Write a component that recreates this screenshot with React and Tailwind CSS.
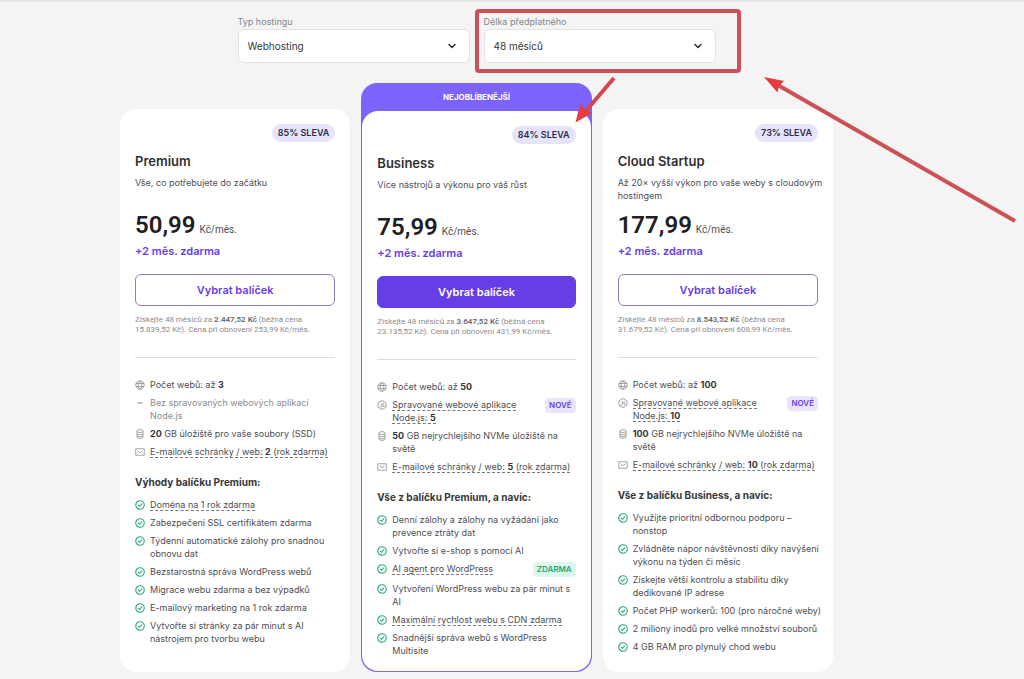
import React, { useState } from 'react';
import { ChevronDown, Minus } from 'lucide-react';

// each entry of `lines` is one row of text, *stars* mark the bold part
const plans = [
  {
    id: 'premium',
    name: 'Premium',
    discount: '85% SLEVA',
    description: 'Vše, co potřebujete do začátku',
    price: '50,99',
    total: '2.447,52 Kč',
    regular: '15.839,52 Kč',
    renewal: '253,99 Kč/měs.',
    specs: [
      { icon: 'globe', lines: ['Počet webů: až *3*'] },
      { icon: 'minus', lines: ['Bez spravovaných webových aplikací', 'Node.js'], muted: true },
      { icon: 'disk', lines: ['*20* GB úložiště pro vaše soubory (SSD)'] },
      { icon: 'mail', lines: ['E-mailové schránky / web: *2* (rok zdarma)'], hint: true },
    ],
    perksTitle: 'Výhody balíčku Premium:',
    perks: [
      { lines: ['Doména na 1 rok zdarma'], hint: true },
      { lines: ['Zabezpečení SSL certifikátem zdarma'] },
      { lines: ['Týdenní automatické zálohy pro snadnou', 'obnovu dat'] },
      { lines: ['Bezstarostná správa WordPress webů'] },
      { lines: ['Migrace webu zdarma a bez výpadků'] },
      { lines: ['E-mailový marketing na 1 rok zdarma'] },
      { lines: ['Vytvořte si stránky za pár minut s AI', 'nástrojem pro tvorbu webu'] },
    ],
  },
  {
    id: 'business',
    name: 'Business',
    popular: true,
    discount: '84% SLEVA',
    description: 'Více nástrojů a výkonu pro váš růst',
    price: '75,99',
    total: '3.647,52 Kč',
    regular: '23.135,52 Kč',
    renewal: '431,99 Kč/měs.',
    specs: [
      { icon: 'globe', lines: ['Počet webů: až *50*'] },
      { icon: 'node', lines: ['Spravované webové aplikace', 'Node.js: *5*'], hint: true, tag: 'NOVÉ' },
      { icon: 'disk', lines: ['*50* GB nejrychlejšího NVMe úložiště na', 'světě'] },
      { icon: 'mail', lines: ['E-mailové schránky / web: *5* (rok zdarma)'], hint: true },
    ],
    perksTitle: 'Vše z balíčku Premium, a navíc:',
    perks: [
      { lines: ['Denní zálohy a zálohy na vyžádání jako', 'prevence ztráty dat'] },
      { lines: ['Vytvořte si e-shop s pomocí AI'] },
      { lines: ['AI agent pro WordPress'], hint: true, tag: 'ZDARMA' },
      { lines: ['Vytvoření WordPress webu za pár minut s', 'AI'] },
      { lines: ['Maximální rychlost webu s CDN zdarma'], hint: true },
      { lines: ['Snadnější správa webů s WordPress', 'Multisite'] },
    ],
  },
  {
    id: 'cloud',
    name: 'Cloud Startup',
    discount: '73% SLEVA',
    description: 'Až 20× vyšší výkon pro vaše weby s cloudovým\nhostingem',
    price: '177,99',
    total: '8.543,52 Kč',
    regular: '31.679,52 Kč',
    renewal: '608,99 Kč/měs.',
    specs: [
      { icon: 'globe', lines: ['Počet webů: až *100*'] },
      { icon: 'node', lines: ['Spravované webové aplikace', 'Node.js: *10*'], hint: true, tag: 'NOVÉ' },
      { icon: 'disk', lines: ['*100* GB nejrychlejšího NVMe úložiště na', 'světě'] },
      { icon: 'mail', lines: ['E-mailové schránky / web: *10* (rok zdarma)'], hint: true },
    ],
    perksTitle: 'Vše z balíčku Business, a navíc:',
    perks: [
      { lines: ['Využijte prioritní odbornou podporu –', 'nonstop'] },
      { lines: ['Zvládněte nápor návštěvnosti díky navýšení', 'výkonu na týden či měsíc'] },
      { lines: ['Získejte větší kontrolu a stabilitu díky', 'dedikované IP adrese'] },
      { lines: ['Počet PHP workerů: 100 (pro náročné weby)'] },
      { lines: ['2 miliony inodů pro velké množství souborů'] },
      { lines: ['4 GB RAM pro plynulý chod webu'] },
    ],
  },
];

const iconPaths = {
  globe: 'M10 1.5a8.5 8.5 0 1 0 0 17 8.5 8.5 0 0 0 0-17ZM10 1.5c-5 5-5 12 0 17M10 1.5c5 5 5 12 0 17M2 7h16M2 13h16',
  node: 'M10 1 18 5.5v9L10 19 2 14.5v-9ZM8.5 6.5v6.3c0 1.2-.8 1.7-2.8 1.2M14.5 8c-1.2-1-3.5-.8-3.5.7 0 1.9 3.7 1 3.7 2.9 0 1.6-2.7 1.8-4 .6',
  disk: 'M4 4c0-3.5 12-3.5 12 0v12c0 3.5-12 3.5-12 0ZM4 5c0 2.5 12 2.5 12 0M4 9.5c0 2.5 12 2.5 12 0M4 13.5c0 2.5 12 2.5 12 0',
  mail: 'M1.5 3.5h17v13h-17ZM5 7.5l5 4 5-4',
};

function FeatureIcon({ name }) {
  if (name === 'minus') {
    return <Minus className="ml-px size-2" strokeWidth={3} />;
  }
  if (iconPaths[name]) {
    return (
      <svg className="size-[10px]" viewBox="0 0 20 20" fill="none" stroke="currentColor" strokeWidth="1.5" strokeLinejoin="round">
        <path d={iconPaths[name]} />
      </svg>
    );
  }
  return (
    <svg className="size-[10px] text-[#2aa876]" viewBox="0 0 20 20" fill="none" stroke="currentColor" strokeWidth="2.2" strokeLinecap="round">
      <circle cx="10" cy="10" r="8.5" />
      <path d="m6.5 10.500 2.500 2.200 4.500-5" />
    </svg>
  );
}

function Feature({ item }) {
  return (
    <li className={`flex items-start ${item.muted ? 'text-[#8b8b90]' : 'text-[#4d4e53]'}`}>
      <span className="flex h-[13px] w-[15px] shrink-0 items-center text-[#86878c]">
        <FeatureIcon name={item.icon} />
      </span>
      <span className="min-w-0 grow whitespace-nowrap">
        {item.lines.map((line) => (
          <span key={line} className="block">
            <span className={item.hint ? 'border-b border-dashed border-[#77787d]' : ''}>
              {line.split('*').map((part, i) =>
                i % 2 ? (
                  <strong key={i} className="font-bold text-[#36373b]">
                    {part}
                  </strong>
                ) : (
                  part
                )
              )}
            </span>
          </span>
        ))}
      </span>
      {item.tag && (
        <span
          className={`shrink-0 rounded px-1 text-[8px] leading-[15px] font-semibold ${
            item.tag === 'ZDARMA' ? 'bg-[#def7ec] text-[#1fa873]' : 'bg-[#ebe4ff] text-[#673de6]'
          }`}
        >
          {item.tag}
        </span>
      )}
    </li>
  );
}

function PlanBody({ plan }) {
  return (
    <div className="min-w-0 grow rounded-2xl bg-white px-[15px] pt-[15px] pb-[14px]">
      <div className="flex justify-end">
        <span className="rounded-full bg-[#e5e4fc] px-[6px] text-[9px] leading-[18px] font-semibold text-[#2f2b4a]">
          {plan.discount}
        </span>
      </div>
      <h2 className="mt-[9px] text-[13px] leading-5 font-semibold text-[#2f3033]">{plan.name}</h2>
      <p className="mt-[5px] h-7 text-[9px] leading-[13px] whitespace-pre text-[#4d4e53]">{plan.description}</p>
      <p className="mt-[7px] flex items-baseline gap-1 font-['Roboto',sans-serif] text-[#1f2024]">
        <span className="text-2xl leading-7 font-semibold">{plan.price}</span>
        <span className="text-[10px] leading-4 text-[#4d4e53]">Kč/měs.</span>
      </p>
      <p className="mt-1 text-[11px] leading-4 font-semibold text-[#673de6]">+2 měs. zdarma</p>
      <button
        type="button"
        className={`mt-[15px] h-8 w-full rounded-md border text-[11px] font-semibold ${
          plan.popular ? 'border-[#673de6] bg-[#673de6] text-white' : 'border-[#8d7cc4] bg-white text-[#673de6]'
        }`}
      >
        Vybrat balíček
      </button>
      <p className="mt-[9px] h-[22px] font-['Roboto',sans-serif] text-[8px] leading-[10px] whitespace-nowrap text-[#8b8b90]">
        Získejte 48 měsíců za <strong className="font-semibold text-[#66676c]">{plan.total}</strong> (běžná cena
        <br />
        {plan.regular}). Cena při obnovení {plan.renewal}
      </p>
      <hr className="mt-5 border-[#dadce0]" />
      <ul className="mt-5 flex flex-col gap-[5px] text-[9px] leading-[13px]">
        {plan.specs.map((item) => (
          <Feature key={item.icon} item={item} />
        ))}
      </ul>
      <h3 className="mt-4 text-[10px] leading-4 font-bold text-[#36373b]">{plan.perksTitle}</h3>
      <ul className="mt-2 flex flex-col gap-[5px] text-[9px] leading-[13px]">
        {plan.perks.map((item) => (
          <Feature key={item.lines[0]} item={item} />
        ))}
      </ul>
    </div>
  );
}

function PlanCard({ plan }) {
  if (!plan.popular) {
    return (
      <section className="mt-[26px] flex">
        <PlanBody plan={plan} />
      </section>
    );
  }
  return (
    <section className="flex flex-col rounded-2xl bg-[#7c63fd] p-px">
      <p className="text-center text-[8px] leading-[27px] font-bold text-white">NEJOBLÍBENĚJŠÍ</p>
      <PlanBody plan={plan} />
    </section>
  );
}

function Filter({ id, label, value, onChange, options, highlighted }) {
  return (
    <div className="relative w-[232px]">
      <label htmlFor={id} className="block text-[9px] leading-[14px] text-[#85868a]">
        {label}
      </label>
      <div className="relative">
        <select
          id={id}
          value={value}
          onChange={(e) => onChange(e.target.value)}
          className="h-[34px] w-full appearance-none rounded-md border border-[#e2e3e6] bg-white px-[9px] text-[10px] text-[#36373b]"
        >
          {options.map((option) => (
            <option key={option}>{option}</option>
          ))}
        </select>
        <ChevronDown className="pointer-events-none absolute top-[11px] right-3 size-3 text-[#2f3033]" strokeWidth={3} />
      </div>
      {highlighted && (
        <div className="pointer-events-none absolute -top-[6px] -right-[25px] -bottom-[10px] -left-[9px] rounded border-4 border-[#cb5156]" />
      )}
    </div>
  );
}

function Arrows() {
  return (
    <svg className="pointer-events-none absolute top-0 left-0" width="1024" height="240" viewBox="0 0 1024 240" fill="none">
      <path d="M614 78 585 112" stroke="#d2484b" strokeWidth="4" />
      <path d="M575.5 122.5 580 104.5 585 109 592 113Z" fill="#e33d40" />
      <path d="M1015 221 776 84" stroke="#cb5156" strokeWidth="4" />
      <path d="M764 77 784 81 779 86 777.5 92.5Z" fill="#e33d40" />
    </svg>
  );
}

export default function App() {
  const [hosting, setHosting] = useState('Webhosting');
  const [period, setPeriod] = useState('48 měsíců');

  return (
    <main className="relative min-h-screen overflow-hidden bg-[#f4f4f5] pb-[6px] font-['Inter','Noto_Sans',sans-serif]">
      <div className="h-[3px] bg-linear-to-b from-[#e2e2e3] to-[#f4f4f5]" />
      <div className="pt-3 pr-[191px] pl-[120px]">
        <div className="flex justify-center gap-[14px]">
          <Filter
            id="hosting"
            label="Typ hostingu"
            value={hosting}
            onChange={setHosting}
            options={['Webhosting', 'Cloud hosting']}
          />
          <Filter
            id="period"
            label="Délka předplatného"
            value={period}
            onChange={setPeriod}
            options={['48 měsíců', '24 měsíců', '12 měsíců', '1 měsíc']}
            highlighted
          />
        </div>
        <div className="mt-5 grid grid-cols-3 gap-[11px]">
          {plans.map((plan) => (
            <PlanCard key={plan.id} plan={plan} />
          ))}
        </div>
      </div>
      <Arrows />
    </main>
  );
}
